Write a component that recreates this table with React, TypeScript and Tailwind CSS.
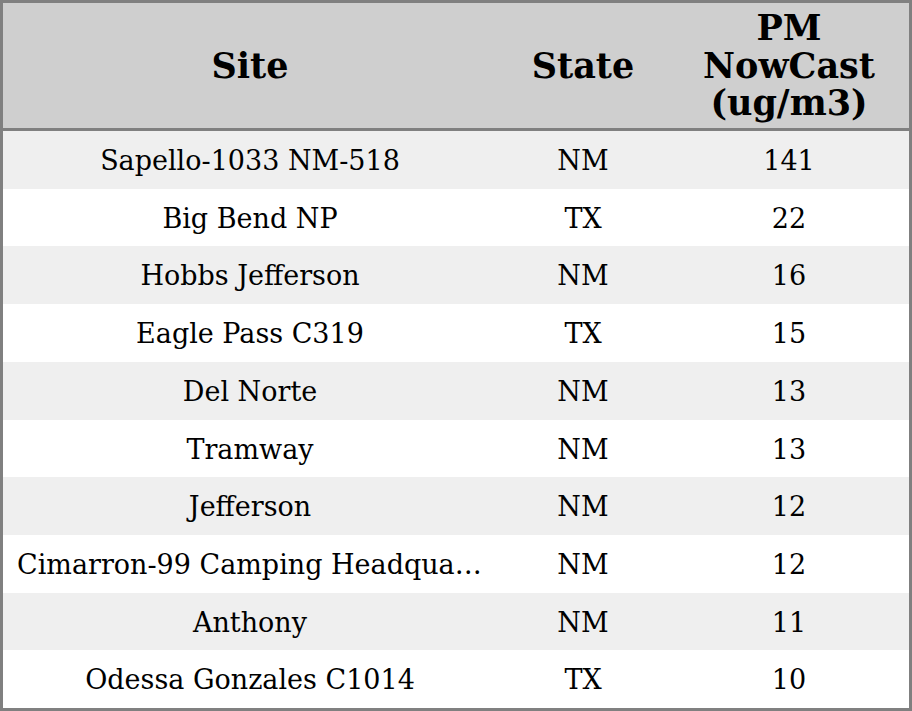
import React from 'react';

const rows = [
    { site: 'Sapello-1033 NM-518', state: 'NM', pm: 141 },
    { site: 'Big Bend NP', state: 'TX', pm: 22 },
    { site: 'Hobbs Jefferson', state: 'NM', pm: 16 },
    { site: 'Eagle Pass C319', state: 'TX', pm: 15 },
    { site: 'Del Norte', state: 'NM', pm: 13 },
    { site: 'Tramway', state: 'NM', pm: 13 },
    { site: 'Jefferson', state: 'NM', pm: 12 },
    { site: 'Cimarron-99 Camping Headquarters', state: 'NM', pm: 12 },
    { site: 'Anthony', state: 'NM', pm: 11 },
    { site: 'Odessa Gonzales C1014', state: 'TX', pm: 10 },
];

export default function App() {
    return (
        <div className="w-[912px] h-[711px] border-[3px] border-[#808080] bg-white text-black font-['DejaVu_Serif',serif] flex flex-col">
            {/* Header */}
            <div className="grid grid-cols-[494px_172px_1fr] h-[128px] shrink-0 bg-[#cfcfcf] border-b-[3px] border-[#808080] font-bold text-[35px] leading-[37.5px] text-center">
                <div className="flex items-center justify-center">Site</div>
                <div className="flex items-center justify-center">State</div>
                <div className="flex items-center justify-center">
                    <span>PM<br />NowCast<br />(ug/m3)</span>
                </div>
            </div>

            {/* Body */}
            <div className="flex-1 grid grid-rows-10">
                {rows.map((r, i) => (
                    <div
                        key={i}
                        className={`grid grid-cols-[494px_172px_1fr] items-center pt-[3px] text-center text-[27px] ${i % 2 === 0 ? 'bg-[#efefef]' : 'bg-white'}`}
                    >
                        <div className="px-[14px] truncate" title={r.site}>{r.site}</div>
                        <div>{r.state}</div>
                        <div>{r.pm}</div>
                    </div>
                ))}
            </div>
        </div>
    );
}
